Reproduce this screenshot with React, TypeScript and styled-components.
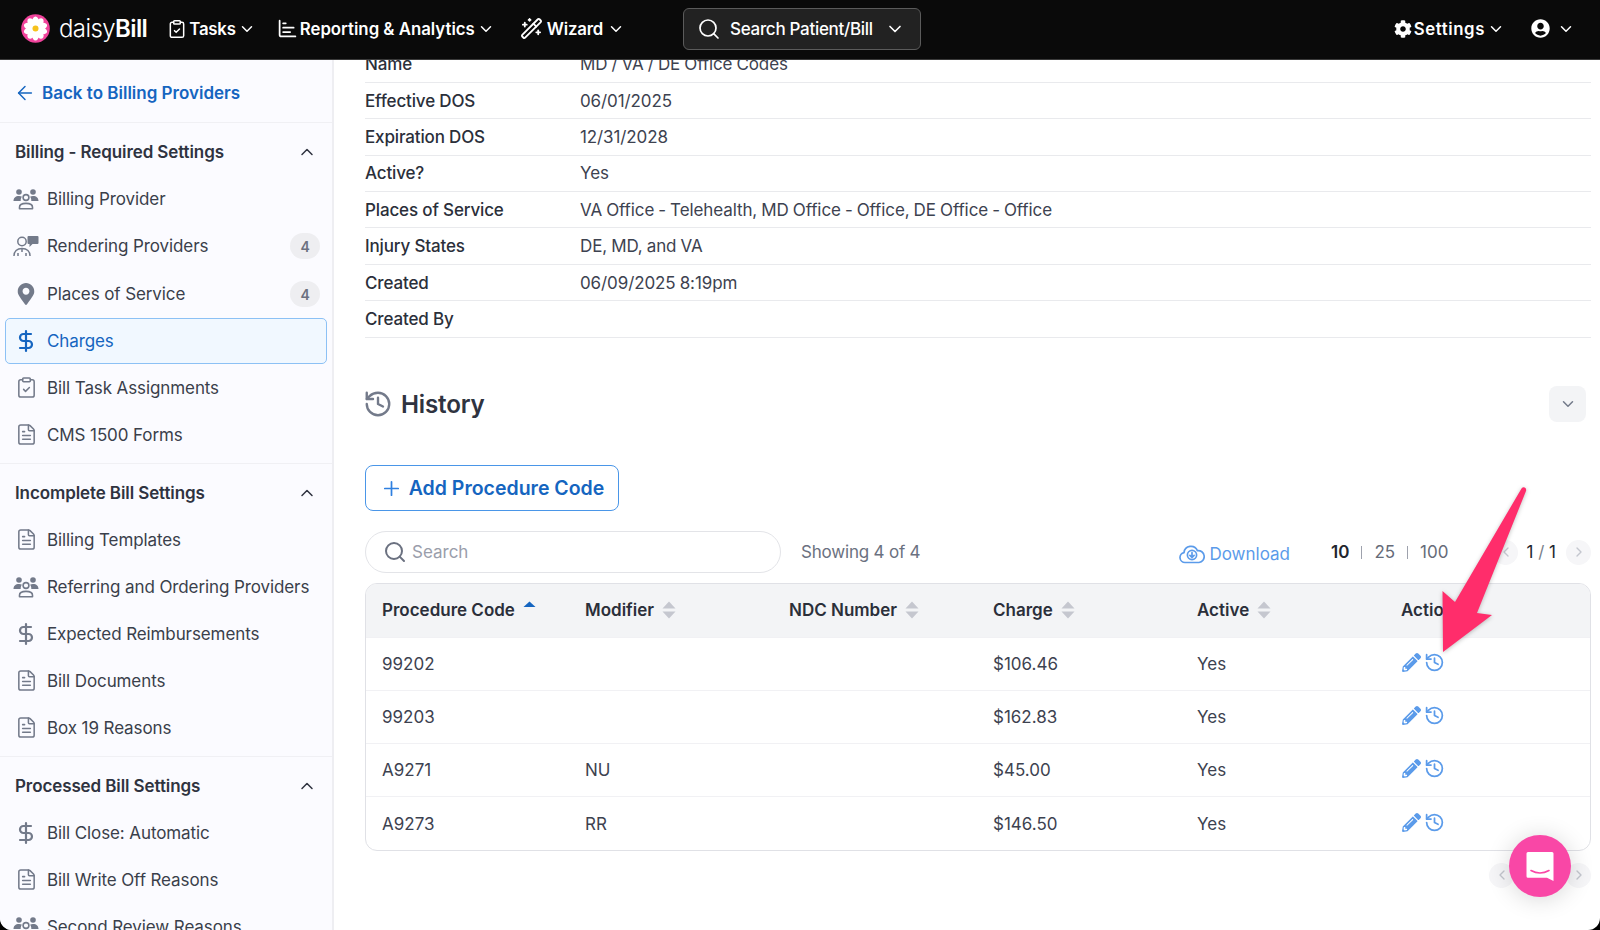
import React from 'react';
import styled, { createGlobalStyle } from 'styled-components';
import {
  ArrowLeft,
  ChartBar,
  ChevronDown,
  ChevronLeft,
  ChevronRight,
  ChevronUp,
  ClipboardCheck,
  DollarSign,
  FileText,
  History,
  Plus,
  Search,
  WandSparkles,
} from 'lucide-react';
import { FaCog, FaMapMarkerAlt, FaPencilAlt, FaUserCircle } from 'react-icons/fa';

const GlobalStyle = createGlobalStyle`
  html, body {
    margin: 0;
    background: #000;
  }
  body {
    font-family: Inter, "Liberation Sans", sans-serif;
    color: #2b2f3a;
  }
  * {
    box-sizing: border-box;
  }
`;

const Window = styled.div`
  position: relative;
  width: 1600px;
  height: 930px;
  display: flex;
  flex-direction: column;
  background: #fff;
  overflow: hidden;
  border-radius: 0 0 12px 12px;
`;

const TopBar = styled.header`
  flex: 0 0 60px;
  display: flex;
  align-items: center;
  padding: 0 25px 2px 21px;
  background: #0a0a0a;
  color: #fff;
  border-bottom: 1px solid #3a3a3a;
`;

const Logo = styled.div`
  display: flex;
  align-items: center;
  gap: 9px;
  margin-right: 20px;
  font-size: 24px;
  font-weight: 300;
  letter-spacing: -0.6px;
  b {
    font-weight: 600;
  }
`;

const NavItem = styled.div<{ $gap?: number; $tracking?: number; $iconGap?: number }>`
  display: flex;
  align-items: center;
  gap: ${p => p.$iconGap ?? 2}px;
  margin-right: ${p => p.$gap ?? 21}px;
  font-size: 16.8px;
  font-weight: 600;
  letter-spacing: ${p => p.$tracking ?? -0.2}px;
  white-space: nowrap;
`;

const SearchBox = styled.div`
  width: 238px;
  height: 42px;
  display: flex;
  align-items: center;
  gap: 9px;
  margin-left: 58px;
  padding: 0 15px 0 13px;
  background: #222;
  border: 1px solid #5b5b5b;
  border-radius: 6px;
  font-size: 17px;
  font-weight: 500;
  letter-spacing: -0.3px;
  white-space: nowrap;
  span {
    flex: 1;
  }
`;

const NavRight = styled.div`
  display: flex;
  align-items: center;
  margin-left: auto;
`;

const Body = styled.div`
  flex: 1;
  display: flex;
  min-height: 0;
`;

const Sidebar = styled.aside`
  flex: 0 0 334px;
  overflow: hidden;
  background: #fbfbff;
  border-right: 2px solid #eeeef2;
`;

const BackLink = styled.div`
  height: 63px;
  display: flex;
  align-items: center;
  gap: 6px;
  padding: 4px 14px 0;
  color: #1565c0;
  font-size: 17px;
  font-weight: 600;
  border-bottom: 1px solid #f0f0f4;
`;

const Section = styled.section`
  padding: 6px 0 5px;
  border-bottom: 1px solid #f0f0f4;
`;

const SectionHead = styled.div`
  height: 46px;
  display: flex;
  align-items: center;
  justify-content: space-between;
  padding: 0 15px 0 15px;
  font-size: 17px;
  font-weight: 600;
  letter-spacing: -0.1px;
  color: #2f3340;
`;

const Item = styled.div<{ $active?: boolean; $tall?: boolean }>`
  height: ${p => (p.$active ? 46 : p.$tall ? 48 : 47)}px;
  display: flex;
  align-items: center;
  margin: 0 ${p => (p.$active ? 5 : 13)}px;
  padding: 0 ${p => (p.$active ? 7 : 0)}px;
  font-size: 17px;
  letter-spacing: -0.1px;
  color: ${p => (p.$active ? '#1565c0' : '#3a3f4b')};
  background: ${p => (p.$active ? '#f1f8ff' : 'transparent')};
  border: ${p => (p.$active ? '1.5px solid #8cc1f5' : 'none')};
  border-radius: ${p => (p.$active ? 5 : 0)}px;
`;

const ItemIcon = styled.span<{ $active?: boolean }>`
  flex: 0 0 26px;
  display: flex;
  justify-content: center;
  margin-right: 8px;
  color: ${p => (p.$active ? '#1565c0' : '#737a8a')};
`;

const Badge = styled.span`
  width: 30px;
  height: 26px;
  margin: 0 -1px 0 auto;
  display: flex;
  align-items: center;
  justify-content: center;
  background: #eeeef1;
  border-radius: 13px;
  color: #6b7180;
  font-size: 14px;
  font-weight: 600;
`;

const Main = styled.main`
  flex: 1;
  min-width: 0;
  overflow: hidden;
  padding: 0 9px 0 31px;
`;

const Details = styled.div`
  margin-top: -13.5px;
`;

const DetailRow = styled.div`
  height: 36.4px;
  display: flex;
  align-items: center;
  font-size: 17px;
  border-bottom: 1.5px solid #e9eaed;
`;

const DetailLabel = styled.span`
  flex: 0 0 215px;
  font-weight: 500;
  letter-spacing: -0.15px;
  color: #2b2f3a;
`;

const DetailValue = styled.span`
  color: #3d4250;
  letter-spacing: -0.1px;
  word-spacing: -0.6px;
`;

const HistoryHead = styled.div`
  height: 36px;
  margin-top: 48.5px;
  display: flex;
  align-items: center;
  padding-right: 5px;
  color: #737a8a;
`;

const HistoryIcon = styled(History)`
  margin-left: -2px;
`;

const HistoryTitle = styled.h2`
  flex: 1;
  margin: 0 0 0 8px;
  font-size: 24.2px;
  font-weight: 600;
  letter-spacing: -0.2px;
  color: #2f3340;
`;

const ToggleButton = styled.button`
  width: 37px;
  height: 36px;
  display: flex;
  align-items: center;
  justify-content: center;
  padding: 0;
  background: #f3f4f6;
  border: none;
  border-radius: 8px;
  color: #737a8a;
`;

const AddButton = styled.button`
  height: 46px;
  width: 254px;
  margin-top: 43px;
  display: flex;
  align-items: center;
  justify-content: center;
  gap: 6px;
  background: #fff;
  border: 1.5px solid #4a96e8;
  border-radius: 8px;
  color: #1565c0;
  font-family: inherit;
  font-size: 19.5px;
  font-weight: 600;
`;

const Toolbar = styled.div`
  height: 42px;
  margin-top: 20px;
  display: flex;
  align-items: center;
  font-size: 17px;
  color: #6b7180;
`;

const SearchField = styled.label`
  width: 416px;
  height: 42px;
  display: flex;
  align-items: center;
  gap: 5px;
  padding: 0 17px;
  border: 1.5px solid #e3e4e8;
  border-radius: 21px;
  color: #6b7180;
`;

const SearchInput = styled.input`
  flex: 1;
  min-width: 0;
  border: none;
  outline: none;
  padding: 0;
  background: none;
  font-family: inherit;
  font-size: 17px;
  &::placeholder {
    color: #9a9eab;
    opacity: 1;
  }
`;

const Showing = styled.span`
  margin-left: 20px;
  letter-spacing: -0.2px;
`;

const Download = styled.span`
  margin-left: auto;
  display: flex;
  align-items: center;
  gap: 4px;
  padding-top: 3px;
  color: #5b9bea;
`;

const PageSizes = styled.div`
  margin-left: 41px;
  display: flex;
  align-items: center;
  gap: 12px;
  color: #666b78;
  i {
    width: 1px;
    height: 13px;
    background: #9ea2ad;
  }
`;

const PageSize = styled.span<{ $current?: boolean }>`
  color: ${p => (p.$current ? '#22252e' : 'inherit')};
  font-weight: ${p => (p.$current ? 600 : 400)};
`;

const PageNote = styled.span`
  margin: 0 10px 0 8px;
  color: #22252e;
  white-space: nowrap;
  em {
    font-style: normal;
    color: #7a7f8c;
  }
`;

const RoundButton = styled.span`
  width: 25px;
  height: 25px;
  display: flex;
  align-items: center;
  justify-content: center;
  background: #f6f6f8;
  border-radius: 50%;
  color: #c3c6ce;
`;

const PrevSlot = styled.div`
  margin-left: 45px;
`;

const TableBox = styled.div`
  margin-top: 10px;
  border: 1.5px solid #e0e1e6;
  border-radius: 12px;
  overflow: hidden;
`;

const Table = styled.table`
  width: 100%;
  table-layout: fixed;
  border-collapse: collapse;
  font-size: 17px;
`;

const Th = styled.th`
  height: 53px;
  padding: 0 0 0 16px;
  text-align: left;
  background: #f3f4f6;
  font-weight: 600;
  color: #2b2f3a;
  & + & {
    padding-left: 15px;
  }
`;

const Td = styled.td`
  height: 53.2px;
  padding: 0 0 0 16px;
  color: #3d4250;
  border-top: 1.5px solid #f1f1f4;
  & + & {
    padding-left: 15px;
  }
`;

const HeadInner = styled.span`
  display: inline-flex;
  align-items: center;
  gap: 8px;
`;

const ActionIcons = styled.span`
  display: inline-flex;
  align-items: center;
  gap: 3px;
  margin-left: 1px;
  color: #5b9bea;
`;

const BottomPager = styled.div`
  margin-top: 12px;
  display: flex;
  justify-content: flex-end;
  gap: 52px;
`;

const ArrowOverlay = styled.svg`
  position: absolute;
  left: 1430px;
  top: 480px;
  filter: drop-shadow(0 1px 2px rgba(0, 0, 0, 0.25));
`;

const ChatButton = styled.div`
  position: absolute;
  right: 29px;
  bottom: 33px;
  width: 62px;
  height: 62px;
  display: flex;
  align-items: center;
  justify-content: center;
  background: #f947a6;
  border-radius: 50%;
  box-shadow: 0 2px 24px rgba(0, 0, 0, 0.16);
`;

const Daisy = () => (
  <svg width="29" height="29" viewBox="0 0 29 29">
    <circle cx="14.5" cy="14.5" r="14.3" fill="#f0439b" />
    {[0, 36, 72, 108, 144, 180, 216, 252, 288, 324].map(a => (
      <ellipse key={a} cx="14.5" cy="7.8" rx="3.4" ry="5.4" fill="#fff" transform={`rotate(${a} 14.5 14.5)`} />
    ))}
    <circle cx="14.5" cy="14.5" r="3" fill="#f6c21c" />
  </svg>
);

const PeopleIcon = () => (
  <svg width="26" height="22" viewBox="0 0 26 22" fill="#737a8a">
    <circle cx="6" cy="4" r="2.8" />
    <circle cx="20" cy="4" r="2.8" />
    <path d="M0.5 13c0-3 2-5 5.5-5 1.2 0 2.2.2 3 .7-1 1-1.4 2.6-1.3 4.3H.5zM25.5 13c0-3-2-5-5.5-5-1.2 0-2.2.2-3 .7 1 1 1.4 2.6 1.3 4.3h7.2z" />
    <circle cx="13" cy="9.5" r="2.9" fill="none" stroke="#737a8a" strokeWidth="1.6" />
    <path d="M6.5 20.8v-1.6c0-2.3 2-3.8 6.5-3.8s6.5 1.5 6.5 3.8v1.6z" fill="none" stroke="#737a8a" strokeWidth="1.6" strokeLinejoin="round" />
  </svg>
);

const RenderingIcon = () => (
  <svg width="26" height="22" viewBox="0 0 26 22" fill="none" stroke="#737a8a" strokeWidth="1.5">
    <circle cx="9" cy="6.5" r="4.2" />
    <path d="M1 21c0-4.5 3-7.5 8-7.5s8 3 8 7.5" />
    <path d="M5 21v-3M13 21v-3M9 14v3" />
    <path d="M15.5 1h9a1 1 0 0 1 1 1v6a1 1 0 0 1-1 1h-5l-3 3V9h-1a1 1 0 0 1-1-1V2a1 1 0 0 1 1-1z" fill="#737a8a" stroke="none" />
  </svg>
);

const CloudIcon = () => (
  <svg width="26" height="20" viewBox="0 0 26 20" fill="none" stroke="#5b9bea" strokeWidth="1.7" strokeLinecap="round" strokeLinejoin="round">
    <path d="M7 18.5H6A5 5 0 0 1 5 8.6 7 7 0 0 1 18.4 6.6 6 6 0 0 1 20 18.5H7z" />
    <circle cx="13" cy="11" r="4.6" />
    <path d="M13 8.6v4.8M10.9 11.4l2.1 2.1 2.1-2.1" />
  </svg>
);

const SortArrows = ({ up }: { up?: boolean }) =>
  up ? (
    <svg width="13" height="14" viewBox="0 0 13 14" style={{ marginBottom: 6 }}>
      <path d="M6.5 1.5 12.5 7H.5z" fill="#1565c0" />
    </svg>
  ) : (
    <svg width="14" height="18" viewBox="0 0 14 18" fill="#c5c7cf">
      <path d="M7 .5 13.5 7.5H.5zM7 17.5.5 10.5h13z" />
    </svg>
  );

const ChatIcon = () => (
  <svg width="30" height="32" viewBox="0 0 30 32">
    <path d="M3 2h24a1.5 1.5 0 0 1 1.5 1.5V31L22 27.8H3A1.5 1.5 0 0 1 1.5 26.3V3.5A1.5 1.5 0 0 1 3 2z" fill="#fff" />
    <path d="M6 20.5c5.5 3 12.5 3 18 0" fill="none" stroke="#f947a6" strokeWidth="1.6" strokeLinecap="round" />
  </svg>
);

type NavEntry = { label: string; icon: React.ReactNode; badge?: number; active?: boolean };

const doc = <FileText size={23} strokeWidth={1.6} />;
const dollar = <DollarSign size={24} strokeWidth={2.2} />;

const groups: { title: string; items: NavEntry[] }[] = [
  {
    title: 'Billing - Required Settings',
    items: [
      { label: 'Billing Provider', icon: <PeopleIcon /> },
      { label: 'Rendering Providers', icon: <RenderingIcon />, badge: 4 },
      { label: 'Places of Service', icon: <FaMapMarkerAlt size={22} />, badge: 4 },
      { label: 'Charges', icon: dollar, active: true },
      { label: 'Bill Task Assignments', icon: <ClipboardCheck size={23} strokeWidth={1.6} /> },
      { label: 'CMS 1500 Forms', icon: doc },
    ],
  },
  {
    title: 'Incomplete Bill Settings',
    items: [
      { label: 'Billing Templates', icon: doc },
      { label: 'Referring and Ordering Providers', icon: <PeopleIcon /> },
      { label: 'Expected Reimbursements', icon: dollar },
      { label: 'Bill Documents', icon: doc },
      { label: 'Box 19 Reasons', icon: doc },
    ],
  },
  {
    title: 'Processed Bill Settings',
    items: [
      { label: 'Bill Close: Automatic', icon: dollar },
      { label: 'Bill Write Off Reasons', icon: doc },
      { label: 'Second Review Reasons', icon: <PeopleIcon /> },
    ],
  },
];

const details = [
  ['Name', 'MD / VA / DE Office Codes'],
  ['Effective DOS', '06/01/2025'],
  ['Expiration DOS', '12/31/2028'],
  ['Active?', 'Yes'],
  ['Places of Service', 'VA Office - Telehealth, MD Office - Office, DE Office - Office'],
  ['Injury States', 'DE, MD, and VA'],
  ['Created', '06/09/2025 8:19pm'],
  ['Created By', ''],
];

const columns = ['Procedure Code', 'Modifier', 'NDC Number', 'Charge', 'Active', 'Actions'];

const charges = [
  ['99202', '', '', '$106.46', 'Yes'],
  ['99203', '', '', '$162.83', 'Yes'],
  ['A9271', 'NU', '', '$45.00', 'Yes'],
  ['A9273', 'RR', '', '$146.50', 'Yes'],
];

const App: React.FC = () => (
  <Window>
    <GlobalStyle />
    <TopBar>
      <Logo>
        <Daisy />
        <span>
          daisy<b>Bill</b>
        </span>
      </Logo>
      <NavItem>
        <ClipboardCheck size={20} strokeWidth={1.8} />
        Tasks
        <ChevronDown size={18} />
      </NavItem>
      <NavItem $gap={25} $tracking={0}>
        <ChartBar size={21} strokeWidth={2} />
        Reporting &amp; Analytics
        <ChevronDown size={18} />
      </NavItem>
      <NavItem $gap={0} $iconGap={4}>
        <WandSparkles size={23} strokeWidth={1.9} />
        Wizard
        <ChevronDown size={18} />
      </NavItem>
      <SearchBox>
        <Search size={24} strokeWidth={1.7} />
        <span>Search Patient/Bill</span>
        <ChevronDown size={20} />
      </SearchBox>
      <NavRight>
        <NavItem $gap={26} $tracking={0.6}>
          <FaCog size={18} />
          Settings
          <ChevronDown size={18} />
        </NavItem>
        <NavItem $gap={0}>
          <FaUserCircle size={19} />
          <ChevronDown size={18} style={{ marginLeft: 5 }} />
        </NavItem>
      </NavRight>
    </TopBar>
    <Body>
      <Sidebar>
        <BackLink>
          <ArrowLeft size={22} strokeWidth={1.6} />
          Back to Billing Providers
        </BackLink>
        {groups.map(group => (
          <Section key={group.title}>
            <SectionHead>
              {group.title}
              <ChevronUp size={20} strokeWidth={1.8} />
            </SectionHead>
            {group.items.map(item => (
              <Item key={item.label} $active={item.active} $tall={!!item.badge}>
                <ItemIcon $active={item.active}>{item.icon}</ItemIcon>
                {item.label}
                {item.badge && <Badge>{item.badge}</Badge>}
              </Item>
            ))}
          </Section>
        ))}
      </Sidebar>
      <Main>
        <Details>
          {details.map(([label, value]) => (
            <DetailRow key={label}>
              <DetailLabel>{label}</DetailLabel>
              <DetailValue>{value}</DetailValue>
            </DetailRow>
          ))}
        </Details>
        <HistoryHead>
          <HistoryIcon size={30} strokeWidth={1.9} />
          <HistoryTitle>History</HistoryTitle>
          <ToggleButton>
            <ChevronDown size={18} />
          </ToggleButton>
        </HistoryHead>
        <AddButton>
          <Plus size={23} strokeWidth={1.8} color="#2f80e0" />
          Add Procedure Code
        </AddButton>
        <Toolbar>
          <SearchField>
            <Search size={24} strokeWidth={2} />
            <SearchInput placeholder="Search" />
          </SearchField>
          <Showing>Showing 4 of 4</Showing>
          <Download>
            <CloudIcon />
            Download
          </Download>
          <PageSizes>
            <PageSize $current>10</PageSize>
            <i />
            <PageSize>25</PageSize>
            <i />
            <PageSize>100</PageSize>
          </PageSizes>
          <PrevSlot>
            <RoundButton>
              <ChevronLeft size={16} />
            </RoundButton>
          </PrevSlot>
          <PageNote>
            1 <em>/</em> 1
          </PageNote>
          <RoundButton>
            <ChevronRight size={16} />
          </RoundButton>
        </Toolbar>
        <TableBox>
          <Table>
            <thead>
              <tr>
                {columns.map((col, i) => (
                  <Th key={col}>
                    <HeadInner>
                      {col}
                      {i < 5 && <SortArrows up={i === 0} />}
                    </HeadInner>
                  </Th>
                ))}
              </tr>
            </thead>
            <tbody>
              {charges.map(row => (
                <tr key={row[0]}>
                  {row.map((cell, i) => (
                    <Td key={i}>{cell}</Td>
                  ))}
                  <Td>
                    <ActionIcons>
                      <FaPencilAlt size={19} />
                      <History size={21} strokeWidth={2} />
                    </ActionIcons>
                  </Td>
                </tr>
              ))}
            </tbody>
          </Table>
        </TableBox>
        <BottomPager>
          <RoundButton>
            <ChevronLeft size={16} />
          </RoundButton>
          <RoundButton>
            <ChevronRight size={16} />
          </RoundButton>
        </BottomPager>
      </Main>
    </Body>
    <ArrowOverlay width="110" height="180" viewBox="1430 480 110 180">
      <path
        d="M1521.5 488.5c2-2.5 5.5-.5 4.5 2.5L1477 613l15 2-49 37-.5-61 12.5 11z"
        fill="#ff2d6b"
      />
    </ArrowOverlay>
    <ChatButton>
      <ChatIcon />
    </ChatButton>
  </Window>
);

export default App;
